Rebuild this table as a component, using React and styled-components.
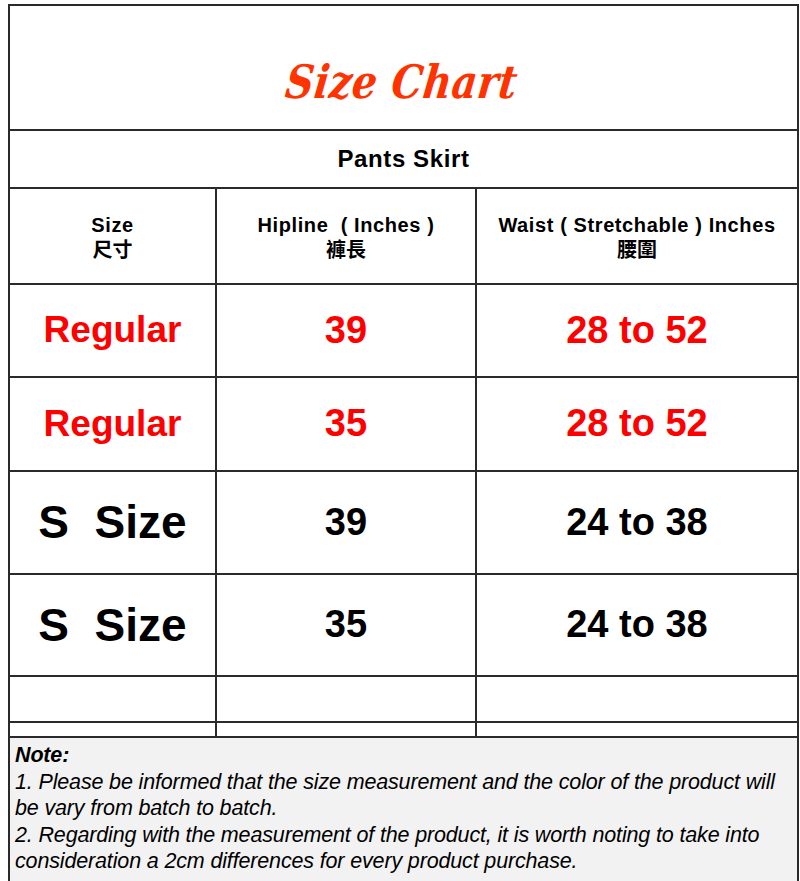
import React from "react";
import styled, { createGlobalStyle } from "styled-components";

const Global = createGlobalStyle`
  html, body { margin: 0; padding: 0; background: #fff; }
  body { font-family: "Liberation Sans", Arial, sans-serif; }
`;

const Page = styled.div`
  padding: 4px 3px 0 8px;
  width: 800px;
  box-sizing: border-box;
`;

const Table = styled.table`
  width: 789px;
  border-collapse: collapse;
  table-layout: fixed;
  border: 2px solid #111;
`;

const Cell = styled.td`
  border: 2px solid #2a2a2a;
  text-align: center;
  vertical-align: middle;
  padding: 0;
  color: ${(p) => (p.$red ? "#ff0000" : "#000")};
  font-weight: bold;
  font-size: ${(p) => p.$size || 32}px;
  line-height: 1.1;
  white-space: nowrap;
`;

const Row = styled.tr`
  height: ${(p) => p.$h}px;
`;

const Title = styled.div`
  font-family: "DejaVu Serif", "Liberation Serif", serif;
  font-style: italic;
  font-weight: bold;
  color: #ff3300;
  font-size: 46px;
  letter-spacing: 0.5px;
  padding-top: 30px;
  transform: scaleX(0.85) skewX(-8deg);
`;

const SubTitle = styled.div`
  font-size: 24px;
  font-weight: bold;
  letter-spacing: 0.6px;
`;

const Head = styled.div`
  font-size: 20px;
  font-weight: bold;
  line-height: 26px;
  letter-spacing: 0.6px;
`;

const HeadCjk = styled.div`
  font-family: "Noto Sans CJK TC", "Noto Sans CJK SC", sans-serif;
  font-size: 20px;
  font-weight: 700;
  line-height: 22px;
`;

const Note = styled.td`
  background: #f2f2f2;
  border: 2px solid #2a2a2a;
  padding: 4px 22px 8px 5px;
  font-style: italic;
  font-size: 21.5px;
  line-height: 26.5px;
  color: #000;
  letter-spacing: -0.15px;
`;

const NoteHead = styled.div`
  font-weight: bold;
`;

const rows = [
  { size: "Regular", hip: "39", waist: "28 to 52", red: true, h: 93 },
  { size: "Regular", hip: "35", waist: "28 to 52", red: true, h: 94 },
  { size: "S\u00a0\u00a0Size", hip: "39", waist: "24 to 38", red: false, h: 103 },
  { size: "S\u00a0\u00a0Size", hip: "35", waist: "24 to 38", red: false, h: 102 },
];

export default function App() {
  return (
    <>
      <Global />
      <Page>
        <Table>
          <colgroup>
            <col style={{ width: 207 }} />
            <col style={{ width: 260 }} />
            <col style={{ width: 322 }} />
          </colgroup>
          <tbody>
            <Row $h={125}>
              <Cell colSpan={3}>
                <Title>Size Chart</Title>
              </Cell>
            </Row>
            <Row $h={58}>
              <Cell colSpan={3}>
                <SubTitle>Pants Skirt</SubTitle>
              </Cell>
            </Row>
            <Row $h={96}>
              <Cell>
                <Head>Size</Head>
                <HeadCjk>尺寸</HeadCjk>
              </Cell>
              <Cell>
                <Head>Hipline &nbsp;( Inches )</Head>
                <HeadCjk>褲長</HeadCjk>
              </Cell>
              <Cell>
                <Head>Waist ( Stretchable ) Inches</Head>
                <HeadCjk>腰圍</HeadCjk>
              </Cell>
            </Row>
            {rows.map((r, i) => (
              <Row key={i} $h={r.h}>
                <Cell $red={r.red} $size={r.red ? 37 : 46}>{r.size}</Cell>
                <Cell $red={r.red} $size={38}>{r.hip}</Cell>
                <Cell $red={r.red} $size={38}>{r.waist}</Cell>
              </Row>
            ))}
            <Row $h={46}>
              <Cell />
              <Cell />
              <Cell />
            </Row>
            <Row $h={15}>
              <Cell />
              <Cell />
              <Cell />
            </Row>
            <tr>
              <Note colSpan={3}>
                <NoteHead>Note:</NoteHead>
                <div>1. Please be informed that the size measurement and the color of the product will be vary from batch to batch.</div>
                <div>2. Regarding with the measurement of the product, it is worth noting to take into consideration a 2cm differences for every product purchase.</div>
              </Note>
            </tr>
          </tbody>
        </Table>
      </Page>
    </>
  );
}
